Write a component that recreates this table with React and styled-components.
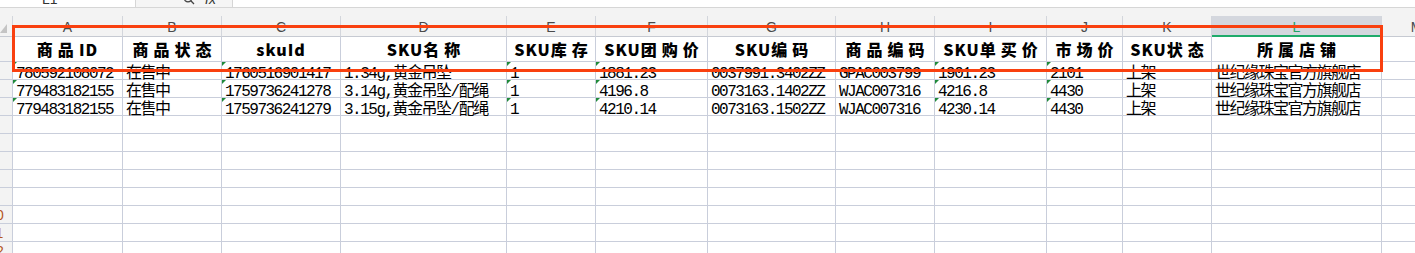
import React from 'react';
import styled, { createGlobalStyle, css } from 'styled-components';

const GlobalStyle = createGlobalStyle`
  html, body {
    margin: 0;
    padding: 0;
    background: #fff;
    overflow: hidden;
  }
  * {
    box-sizing: border-box;
  }
`;

const COLUMNS = [
  { key: 'A', w: 110, head: '商品ID', mark: true },
  { key: 'B', w: 99, head: '商品状态' },
  { key: 'C', w: 119, head: 'skuId', mark: true },
  { key: 'D', w: 166, head: 'SKU名称' },
  { key: 'E', w: 89, head: 'SKU库存', mark: true },
  { key: 'F', w: 112, head: 'SKU团购价', mark: true },
  { key: 'G', w: 128, head: 'SKU编码' },
  { key: 'H', w: 99, head: '商品编码' },
  { key: 'I', w: 112, head: 'SKU单买价', mark: true },
  { key: 'J', w: 76, head: '市场价', mark: true },
  { key: 'K', w: 89, head: 'SKU状态' },
  { key: 'L', w: 170, head: '所属店铺', active: true },
  { key: 'M', w: 70 },
];

const ROWS = [
  ['780592108072', '在售中', '1760516901417', '1.34g,黄金吊坠', '1', '1881.23', '0037991.3402ZZ', 'GPAC003799', '1901.23', '2101', '上架', '世纪缘珠宝官方旗舰店'],
  ['779483182155', '在售中', '1759736241278', '3.14g,黄金吊坠/配绳', '1', '4196.8', '0073163.1402ZZ', 'WJAC007316', '4216.8', '4430', '上架', '世纪缘珠宝官方旗舰店'],
  ['779483182155', '在售中', '1759736241279', '3.15g,黄金吊坠/配绳', '1', '4210.14', '0073163.1502ZZ', 'WJAC007316', '4230.14', '4430', '上架', '世纪缘珠宝官方旗舰店'],
];

const TOTAL_ROWS = 12;
const GRID = '#c9cedb';

const Page = styled.div`
  position: relative;
  width: 1415px;
  height: 253px;
  overflow: hidden;
  background: #fff;
`;

/* formula bar, scrolled so only its lower edge shows */
const Strip = styled.div`
  display: flex;
  height: 8px;
  border-bottom: 1px solid #d6d6d6;
  overflow: hidden;
`;

const NameBox = styled.div`
  display: flex;
  align-items: flex-end;
  width: 136px;
  padding-left: 42px;
  border-right: 1px solid #d6d6d6;
  overflow: hidden;
`;

const FxBox = styled.div`
  display: flex;
  align-items: flex-end;
  gap: 10px;
  width: 97px;
  padding-left: 47px;
  background: #f5f5f5;
  border-right: 1px solid #d6d6d6;
  overflow: hidden;
`;

const FormulaInput = styled.div`
  flex: 1;
`;

const Peek = styled.div`
  flex-shrink: 0;
  height: 16px;
  line-height: 16px;
  font-family: 'Liberation Sans', sans-serif;
  font-size: 14px;
  font-style: ${(p) => (p.$italic ? 'italic' : 'normal')};
  color: #333;
  display: flex;
  align-items: center;
`;

const Spacer = styled.div`
  height: 8px;
  background: #f3f3f3;
`;

const Sheet = styled.div`
  display: grid;
  grid-template-columns: ${(p) => p.$cols};
  grid-template-rows: 21px 25px repeat(${TOTAL_ROWS - 1}, 18px);
  width: max-content;
`;

const Corner = styled.div`
  display: flex;
  justify-content: flex-end;
  align-items: flex-end;
  padding: 0 5px 3px 0;
  background: #f3f3f3;
  border-right: 1px solid #d3d6dc;
  border-bottom: 1px solid #c6cad2;
`;

const CornerMark = styled.div`
  width: 0;
  height: 0;
  border-left: 7px solid transparent;
  border-bottom: 9px solid #c4c4c4;
`;

const ColHead = styled.div`
  display: flex;
  justify-content: center;
  align-items: center;
  padding-top: 2px;
  font-family: 'Liberation Sans', sans-serif;
  font-size: 14px;
  color: #4a4a4a;
  background: #f3f3f3;
  border-right: 1px solid #d3d6dc;
  border-bottom: 1px solid #c6cad2;
  ${(p) =>
    p.$active &&
    css`
      background: #d4d7de;
      color: #21a366;
      border-bottom: 2px solid #1fab6b;
    `}
`;

const RowHead = styled.div`
  display: flex;
  justify-content: flex-end;
  align-items: center;
  overflow: hidden;
  background: #f3f3f3;
  border-right: 1px solid ${GRID};
  border-bottom: 1px solid ${GRID};
`;

const RowNo = styled.span`
  flex-shrink: 0;
  width: 32px;
  text-align: center;
  font-family: 'Liberation Sans', sans-serif;
  font-size: 14px;
  color: #b5531c;
`;

const Cell = styled.div`
  position: relative;
  border-right: 1px solid ${GRID};
  border-bottom: 1px solid ${GRID};
  white-space: nowrap;
  ${(p) =>
    p.$mark &&
    css`
      &::before {
        content: '';
        position: absolute;
        top: 0;
        left: 0;
        border-top: 4px solid #1f8a3a;
        border-right: 4px solid transparent;
      }
    `}
`;

const TitleCell = styled(Cell)`
  display: flex;
  justify-content: center;
  align-items: center;
  font-family: 'Noto Sans CJK SC', sans-serif;
  font-size: 16px;
  font-weight: 900;
  color: #000;
  letter-spacing: 1px;
`;

const Wide = styled.span`
  letter-spacing: 5px;
  &:last-child {
    margin-right: -5px;
  }
`;

const DataCell = styled(Cell)`
  padding: 4px 0 0 3px;
  font-family: 'Liberation Mono', 'Noto Sans CJK SC', monospace;
  font-size: 16px;
  line-height: 17px;
  letter-spacing: -1.5px;
  color: #000;
`;

const Highlight = styled.div`
  position: absolute;
  left: 12px;
  top: 25px;
  width: 1371px;
  height: 47px;
  border: 3px solid #f9400f;
  pointer-events: none;
`;

const HAN = /([\u4e00-\u9fff]+)/;

function Label({ text }) {
  return text
    .split(HAN)
    .filter(Boolean)
    .map((part, i) =>
      HAN.test(part) ? <Wide key={i}>{part}</Wide> : <span key={i}>{part}</span>
    );
}

function SearchIcon() {
  return (
    <svg width="12" height="12" viewBox="0 0 12 12" fill="none" stroke="#444" strokeWidth="1.3">
      <circle cx="5" cy="5" r="3.8" />
      <path d="M7.8 7.8 11 11" />
    </svg>
  );
}

export default function App() {
  const template = `13px ${COLUMNS.map((c) => `${c.w}px`).join(' ')}`;

  const rows = [];
  for (let r = 1; r <= TOTAL_ROWS; r++) {
    rows.push(
      <RowHead key={`h${r}`}>
        <RowNo>{r}</RowNo>
      </RowHead>
    );
    COLUMNS.forEach((col, ci) => {
      const id = `${col.key}${r}`;
      if (r === 1) {
        rows.push(
          <TitleCell key={id}>{col.head && <Label text={col.head} />}</TitleCell>
        );
      } else {
        const value = ROWS[r - 2]?.[ci];
        rows.push(
          <DataCell key={id} $mark={value && col.mark}>
            {value}
          </DataCell>
        );
      }
    });
  }

  return (
    <Page>
      <GlobalStyle />
      <Strip>
        <NameBox>
          <Peek>L1</Peek>
        </NameBox>
        <FxBox>
          <Peek>
            <SearchIcon />
          </Peek>
          <Peek $italic>fx</Peek>
        </FxBox>
        <FormulaInput />
      </Strip>
      <Spacer />
      <Sheet $cols={template}>
        <Corner>
          <CornerMark />
        </Corner>
        {COLUMNS.map((col) => (
          <ColHead key={col.key} $active={col.active}>
            {col.key}
          </ColHead>
        ))}
        {rows}
      </Sheet>
      <Highlight />
    </Page>
  );
}
